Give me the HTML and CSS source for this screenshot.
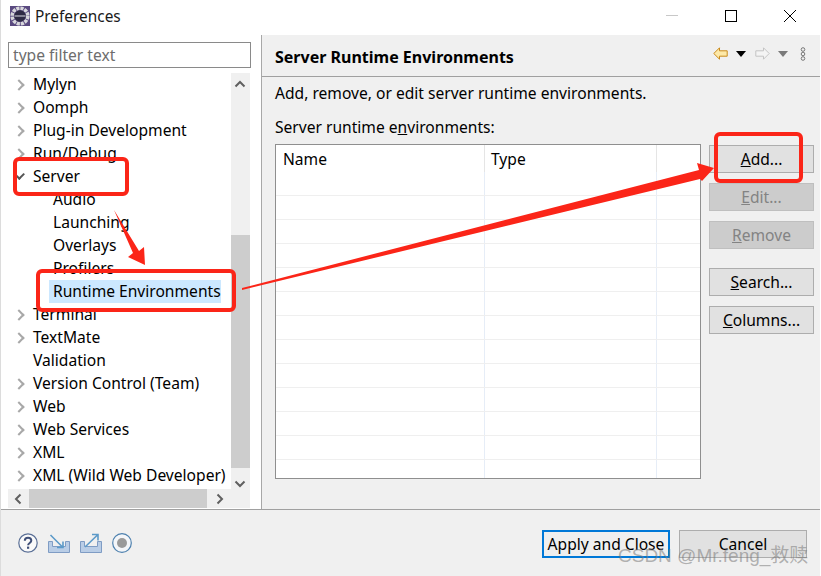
FILE: index.html
```html
<!DOCTYPE html>
<html>
<head>
    <meta charset="UTF-8">
    <title>Preferences</title>
    <link rel="stylesheet" href="styles.css">
</head>
<body>
    <div class="window">
        <!-- title bar -->
        <div class="titlebar">
            <svg class="app-icon" width="20" height="20" viewBox="0 0 20 20">
                <rect width="20" height="20" fill="#5a4a80"/>
                <circle cx="10" cy="10" r="7.800" fill="none" stroke="#d8d8dc" stroke-width="3.600" stroke-dasharray="3.200 .9"/>
                <circle cx="10" cy="10" r="5.800" fill="#2e2a44"/>
                <path d="M4.500 10h11" stroke="#a9a9b6" stroke-width="1.400"/>
            </svg>
            <span class="title-text">Preferences</span>
            <div class="win-controls">
                <svg width="12" height="12" viewBox="0 0 12 12"><path d="M0 5.500h12" stroke="#c8c8c8"/></svg>
                <svg width="12" height="12" viewBox="0 0 12 12"><rect x=".5" y=".5" width="11" height="11" fill="none" stroke="#000"/></svg>
                <svg width="12" height="12" viewBox="0 0 12 12"><path d="M0 0l12 12M12 0L0 12" stroke="#000"/></svg>
            </div>
        </div>

        <div class="main">
            <!-- left side: filter and tree -->
            <div class="sidebar">
                <input class="filter" type="text" placeholder="type filter text">
                <div class="tree-wrap">
                    <div class="tree">
                        <div class="row closed">Mylyn</div>
                        <div class="row closed">Oomph</div>
                        <div class="row closed">Plug-in Development</div>
                        <div class="row closed">Run/Debug</div>
                        <div class="row open">Server</div>
                        <div class="row child">Audio</div>
                        <div class="row child">Launching</div>
                        <div class="row child">Overlays</div>
                        <div class="row child">Profilers</div>
                        <div class="row child"><span class="selected">Runtime Environments</span></div>
                        <div class="row closed">Terminal</div>
                        <div class="row closed">TextMate</div>
                        <div class="row">Validation</div>
                        <div class="row closed">Version Control (Team)</div>
                        <div class="row closed">Web</div>
                        <div class="row closed">Web Services</div>
                        <div class="row closed">XML</div>
                        <div class="row closed">XML (Wild Web Developer)</div>
                    </div>
                    <div class="vscroll">
                        <svg class="sb-up" width="12" height="8" viewBox="0 0 12 8"><path d="M1.500 6.500L6 2l4.500 4.500" fill="none" stroke="#606060" stroke-width="2"/></svg>
                        <svg class="sb-down" width="12" height="8" viewBox="0 0 12 8"><path d="M1.500 1.500L6 6l4.500-4.500" fill="none" stroke="#606060" stroke-width="2"/></svg>
                        <div class="vthumb"></div>
                    </div>
                </div>
                <div class="hscroll">
                    <svg class="sb-left" width="8" height="12" viewBox="0 0 8 12"><path d="M6.500 1.500L2 6l4.500 4.500" fill="none" stroke="#606060" stroke-width="2"/></svg>
                    <div class="hthumb"></div>
                    <svg class="sb-right" width="8" height="12" viewBox="0 0 8 12"><path d="M1.500 1.500L6 6l-4.500 4.500" fill="none" stroke="#606060" stroke-width="2"/></svg>
                </div>
            </div>

            <!-- right side: preference page -->
            <div class="content">
                <div class="page-header">
                    <h1>Server Runtime Environments</h1>
                    <div class="nav-icons">
                        <svg width="15" height="13" viewBox="0 0 15 13"><path d="M.8 6.500L6.500.8v3h7.700v5.400H6.500v3z" fill="#fde9a8" stroke="#c98a1c"/></svg>
                        <svg class="drop" width="10" height="6" viewBox="0 0 10 6"><path d="M0 0h10L5 6z" fill="#000"/></svg>
                        <svg class="fwd" width="15" height="13" viewBox="0 0 15 13"><path d="M14.200 6.500L8.500.8v3H.8v5.400h7.700v3z" fill="#f4f4f4" stroke="#c4c4c4"/></svg>
                        <svg class="drop" width="10" height="6" viewBox="0 0 10 6"><path d="M0 0h10L5 6z" fill="#7a7a7a"/></svg>
                        <svg class="dots" width="6" height="14" viewBox="0 0 6 14"><g fill="none" stroke="#777"><circle cx="3" cy="2.500" r="1.800"/><circle cx="3" cy="7" r="1.800"/><circle cx="3" cy="11.500" r="1.800"/></g></svg>
                    </div>
                </div>
                <div class="page-body">
                    <p class="desc">Add, remove, or edit server runtime environments.</p>
                    <div class="grid">
                        <label class="table-label">Server runtime e<u>n</u>vironments:</label>
                        <span></span>
                        <div class="table">
                            <div class="thead">
                                <div class="col1">Name</div>
                                <div class="col2">Type</div>
                                <div class="col3"></div>
                            </div>
                            <div class="tbody">
                                <div class="trow"><div class="col1"></div><div class="col2"></div><div class="col3"></div></div>
                                <div class="trow"><div class="col1"></div><div class="col2"></div><div class="col3"></div></div>
                                <div class="trow"><div class="col1"></div><div class="col2"></div><div class="col3"></div></div>
                                <div class="trow"><div class="col1"></div><div class="col2"></div><div class="col3"></div></div>
                                <div class="trow"><div class="col1"></div><div class="col2"></div><div class="col3"></div></div>
                                <div class="trow"><div class="col1"></div><div class="col2"></div><div class="col3"></div></div>
                                <div class="trow"><div class="col1"></div><div class="col2"></div><div class="col3"></div></div>
                                <div class="trow"><div class="col1"></div><div class="col2"></div><div class="col3"></div></div>
                                <div class="trow"><div class="col1"></div><div class="col2"></div><div class="col3"></div></div>
                                <div class="trow"><div class="col1"></div><div class="col2"></div><div class="col3"></div></div>
                                <div class="trow"><div class="col1"></div><div class="col2"></div><div class="col3"></div></div>
                                <div class="trow"><div class="col1"></div><div class="col2"></div><div class="col3"></div></div>
                                <div class="trow"><div class="col1"></div><div class="col2"></div><div class="col3"></div></div>
                            </div>
                        </div>
                        <div class="side-buttons">
                            <button type="button" class="btn"><u>A</u>dd...</button>
                            <button type="button" class="btn" disabled><u>E</u>dit...</button>
                            <button type="button" class="btn" disabled><u>R</u>emove</button>
                            <button type="button" class="btn spaced"><u>S</u>earch...</button>
                            <button type="button" class="btn"><u>C</u>olumns...</button>
                        </div>
                    </div>
                </div>
            </div>
        </div>

        <!-- bottom bar -->
        <div class="footer">
            <div class="foot-icons">
                <svg width="20" height="20" viewBox="0 0 20 20">
                    <circle cx="10" cy="10" r="9.200" fill="#fafafa" stroke="#5a6f96" stroke-width="1.200"/>
                    <path d="M6.800 7.800C6.800 5.800 8.300 4.800 10 4.800s3.300 1 3.300 2.800c0 2.400-3.200 2.300-3.200 4.700" fill="none" stroke="#3f4f78" stroke-width="2"/>
                    <rect x="9" y="13.600" width="2.200" height="2.200" fill="#3f4f78"/>
                </svg>
                <svg width="22" height="20" viewBox="0 0 22 20">
                    <path d="M.5 8.500h4v5h13v-5h4v11H.5z" fill="#b9cde6" stroke="#7f9cc4"/>
                    <path d="M2.500 2L15 14.500M15 8.500v6H9" fill="none" stroke="#5c9ac9" stroke-width="1.600"/>
                </svg>
                <svg width="22" height="20" viewBox="0 0 22 20">
                    <path d="M.5 8.500h4v5h13v-5h4v11H.5z" fill="#b9cde6" stroke="#7f9cc4"/>
                    <path d="M5 14L18 1.500M12 1.500h6v6" fill="none" stroke="#5c9ac9" stroke-width="1.600"/>
                </svg>
                <svg width="20" height="20" viewBox="0 0 20 20">
                    <circle cx="10" cy="10" r="9.300" fill="#f4f6f9" stroke="#4d80ae" stroke-width="1.200"/>
                    <circle cx="10" cy="10" r="5" fill="#9a9a9a"/>
                </svg>
            </div>
            <div class="foot-buttons">
                <button type="button" class="btn wide default">Apply and Close</button>
                <button type="button" class="btn wide">Cancel</button>
            </div>
        </div>
    </div>

    <!-- red annotations drawn on top of the screenshot -->
    <svg class="marks" width="821" height="576" viewBox="0 0 821 576">
        <g fill="none" stroke="#fb2518" stroke-width="4">
            <rect x="15" y="159" width="112" height="35" rx="4"/>
            <rect x="38" y="271" width="196" height="39" rx="4"/>
            <rect x="716" y="134" width="85" height="47" rx="4"/>
        </g>
        <g fill="#fb2518">
            <path d="M114 210L139 251L144 247L145 265L128 257L133 253z"/>
            <path d="M242 288L699 170L697 163L714 168L702 181L700 179L242 290z"/>
        </g>
    </svg>
    <div class="watermark">CSDN @Mr.feng_救赎</div>
</body>
</html>
```

FILE: styles.css
```css
/* Page and window frame */
body {
    margin: 0;
    width: 821px;
    height: 576px;
    overflow: hidden;
    position: relative;
    background-color: #ffffff;
    font-family: "Noto Sans", "Noto Sans CJK SC", sans-serif;
    font-size: 15.6px;
    color: #000000;
}

.window {
    display: flex;
    flex-direction: column;
    height: 576px;
    border-left: 1px solid #dcdcdc;
    border-right: 1px solid #ffffff;
    box-sizing: border-box;
}

/* Title bar */
.titlebar {
    height: 35px;
    flex: none;
    display: flex;
    align-items: center;
    padding-left: 9px;
    background-color: #ffffff;
}

.app-icon {
    margin-top: -3px;
}

.title-text {
    margin-left: 5px;
    margin-top: -3px;
    font-size: 15.4px;
    color: #1a1a1a;
}

.win-controls {
    margin-left: auto;
    margin-top: -4px;
    display: flex;
    gap: 47px;
    padding-right: 24px;
}

/* Main split */
.main {
    flex: 1;
    display: flex;
    min-height: 0;
}

.sidebar {
    width: 261px;
    flex: none;
    box-sizing: border-box;
    border-right: 1px solid #a8a8a8;
    padding: 7px 0 0 7px;
    display: flex;
    flex-direction: column;
}

.filter {
    width: 243px;
    height: 26px;
    box-sizing: border-box;
    border: 1px solid #8a8a8a;
    padding: 0 4px;
    font-family: inherit;
    font-size: 15.6px;
    outline: none;
    margin-bottom: 5px;
}

.filter::placeholder {
    color: #6d6d6d;
    opacity: 1;
}

.tree-wrap {
    display: flex;
    width: 243px;
    height: 416px;
}

.tree {
    width: 223px;
    overflow: hidden;
}

.row {
    height: 23px;
    line-height: 23px;
    padding-left: 25px;
    position: relative;
    white-space: nowrap;
}

.row.child {
    padding-left: 45px;
}

.row.closed::before {
    content: "";
    position: absolute;
    left: 7px;
    top: 8px;
    width: 6px;
    height: 6px;
    border-top: 2px solid #a8a8a8;
    border-right: 2px solid #a8a8a8;
    transform: rotate(45deg);
}

.row.open::before {
    content: "";
    position: absolute;
    left: 9px;
    top: 6px;
    width: 4px;
    height: 6px;
    border-bottom: 2px solid #555555;
    border-right: 2px solid #555555;
    transform: rotate(45deg);
}

.selected {
    display: block;
    margin-left: -4px;
    padding-left: 4px;
    width: 168px;
    background-color: #cce8ff;
}

/* Scrollbars */
.vscroll {
    width: 19px;
    background-color: #f0f0f0;
    box-sizing: border-box;
    padding: 162px 0 21px;
    position: relative;
}

.vthumb {
    height: 100%;
    background-color: #cdcdcd;
}

.sb-up,
.sb-down {
    position: absolute;
    left: 3px;
}

.sb-up {
    top: 7px;
}

.sb-down {
    bottom: 1px;
}

.hscroll {
    width: 242px;
    height: 19px;
    flex: none;
    display: flex;
    align-items: center;
    background-color: #f0f0f0;
}

.hthumb {
    width: 178px;
    height: 19px;
    margin-left: 7px;
    background-color: #cdcdcd;
}

.sb-left {
    margin-left: 6px;
}

.sb-right {
    margin-left: 9px;
}

/* Preference page */
.content {
    flex: 1;
    background-color: #f0f0f0;
    min-width: 0;
}

.page-header {
    height: 41px;
    border-bottom: 1px solid #a0a0a0;
    display: flex;
    align-items: center;
    padding-left: 13px;
}

.page-header h1 {
    margin: 3px 0 0;
    font-size: 16px;
    font-weight: 700;
}

.nav-icons {
    margin-left: auto;
    display: flex;
    align-items: center;
    padding-right: 14px;
    margin-top: -4px;
}

.nav-icons .drop {
    margin: 0 9px 0 8px;
}

.nav-icons .dots {
    margin-left: 3px;
}

.page-body {
    padding: 5px 0 0 13px;
}

.desc {
    margin: 0 0 12px;
    line-height: 22px;
}

.grid {
    display: grid;
    grid-template-columns: 426px 105px;
    column-gap: 8px;
}

.table-label {
    line-height: 22px;
    margin-bottom: 6px;
    display: block;
}

/* Table */
.table {
    height: 335px;
    box-sizing: border-box;
    border: 1px solid #8f8f8f;
    background-color: #ffffff;
    overflow: hidden;
}

.thead,
.trow {
    display: flex;
}

.thead {
    height: 27px;
    line-height: 28px;
}

.trow {
    height: 24px;
    box-sizing: border-box;
    border-bottom: 1px solid #efefef;
}

.col1 {
    width: 209px;
    padding-left: 7px;
    box-sizing: border-box;
    border-right: 1px solid #e6edf7;
}

.col2 {
    width: 172px;
    padding-left: 6px;
    box-sizing: border-box;
    border-right: 1px solid #e6edf7;
}

.col3 {
    flex: 1;
}

.thead .col1,
.thead .col2 {
    border-right-color: #e5e5e5;
}

/* Buttons */
.btn {
    width: 105px;
    height: 28px;
    box-sizing: border-box;
    border: 1px solid #adadad;
    background-color: #e1e1e1;
    font-family: inherit;
    font-size: 15.6px;
    color: #000000;
    padding: 0;
}

.btn:disabled {
    background-color: #cccccc;
    border-color: #bfbfbf;
    color: #838383;
}

.side-buttons {
    display: flex;
    flex-direction: column;
    align-items: flex-start;
    gap: 10px;
    margin-top: 1px;
}

.btn.spaced {
    margin-top: 9px;
}

.btn.wide {
    width: 128px;
}

.btn.default {
    border: 2px solid #0078d7;
    background-color: #efefef;
}

/* Bottom bar */
.footer {
    height: 67px;
    flex: none;
    box-sizing: border-box;
    border-top: 1px solid #a0a0a0;
    background-color: #f0f0f0;
    display: flex;
    align-items: flex-start;
    padding: 20px 13px 0 17px;
}

.foot-icons {
    display: flex;
    align-items: center;
    gap: 10px;
    margin-top: 3px;
}

.foot-buttons {
    margin-left: auto;
    display: flex;
    gap: 9px;
}

/* Things that lie over the window */
.marks {
    position: absolute;
    left: 0;
    top: 0;
    pointer-events: none;
}

.watermark {
    position: absolute;
    left: 618px;
    top: 545px;
    font-family: "Liberation Sans", "Noto Sans CJK SC", sans-serif;
    font-size: 19px;
    line-height: 22px;
    color: rgba(120, 120, 120, 0.55);
    white-space: nowrap;
}
```
